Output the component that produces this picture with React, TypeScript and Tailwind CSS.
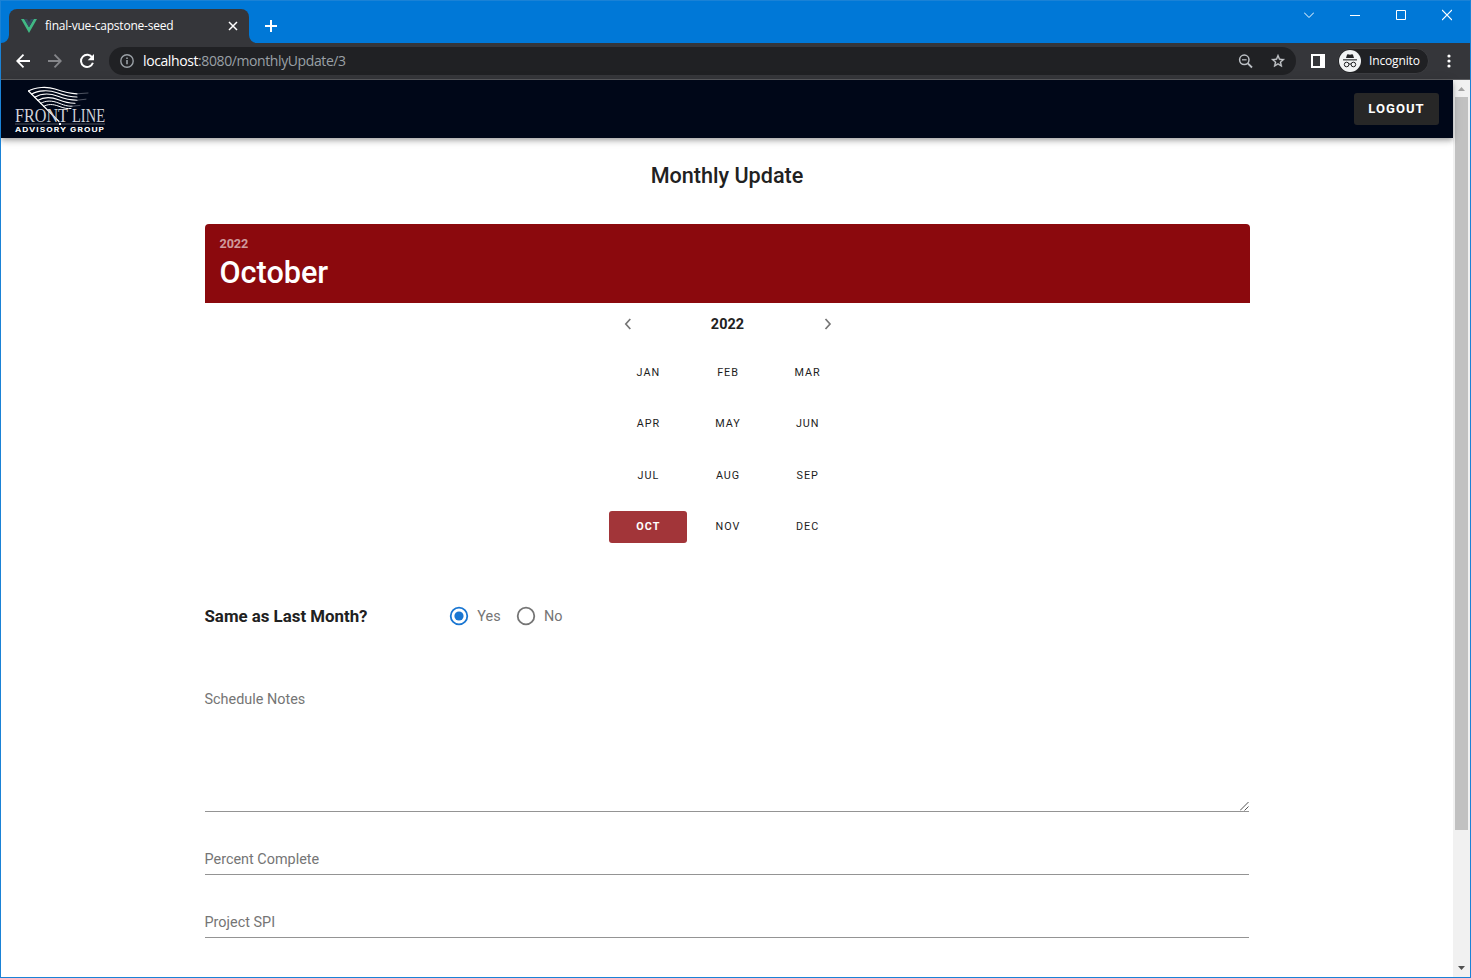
import React from "react";

const months = ["JAN", "FEB", "MAR", "APR", "MAY", "JUN", "JUL", "AUG", "SEP", "OCT", "NOV", "DEC"];

function VueLogo() {
  return (
    <svg width="16" height="14" viewBox="0 0 16 14" className="shrink-0">
      <path d="M0 0h3.2L8 8.3 12.8 0H16L8 13.9z" fill="#41b883" />
      <path d="M3.2 0H6.1L8 3.3 9.9 0h2.9L8 8.3z" fill="#35495e" />
    </svg>
  );
}

function TitleBar() {
  return (
    <div className="flex h-[42px] w-full bg-[#0078d7] pl-[8px] pt-[8px]">
      <div className="relative flex h-[34px] w-[240px] shrink-0 items-center rounded-t-[8px] bg-[#35363a] pl-[12px]">
        <svg className="absolute -left-[8px] bottom-0" width="8" height="8" viewBox="0 0 8 8">
          <path d="M8 0v8H0a8 8 0 0 0 8-8z" fill="#35363a" />
        </svg>
        <svg className="absolute -right-[8px] bottom-0" width="8" height="8" viewBox="0 0 8 8">
          <path d="M0 0v8h8a8 8 0 0 1-8-8z" fill="#35363a" />
        </svg>
        <VueLogo />
        <span className="ml-[8px] w-[183px] whitespace-nowrap font-['Open_Sans',sans-serif] text-[12px] tracking-[-0.22px] text-white">
          final-vue-capstone-seed
        </span>
        <svg width="10" height="10" viewBox="0 0 10 10" className="shrink-0" stroke="#fff" strokeWidth="1.5">
          <path d="M1 1l8 8M9 1L1 9" />
        </svg>
      </div>
      <svg width="12" height="12" viewBox="0 0 12 12" className="ml-[16px] mt-[11px]" stroke="#fff" strokeWidth="2">
        <path d="M6 0v12M0 6h12" />
      </svg>
      <div className="ml-auto flex h-[12px] gap-[36px] pr-[18px]">
        <svg width="10" height="12" viewBox="0 0 10 12" fill="none" stroke="#fff" strokeWidth="1">
          <path d="M0 3.500l5 5 5-5" />
        </svg>
        <svg width="10" height="12" viewBox="0 0 10 12" stroke="#fff">
          <path d="M0 6.500h10" />
        </svg>
        <svg width="10" height="12" viewBox="0 0 10 12" fill="none" stroke="#fff">
          <path d="M.5 1.500h9v9h-9z" />
        </svg>
        <svg width="10" height="12" viewBox="0 0 10 12" fill="none" stroke="#fff" strokeWidth="1.2">
          <path d="M0 1l10 10M10 1L0 11" />
        </svg>
      </div>
    </div>
  );
}

function Toolbar() {
  return (
    <div className="flex h-[37px] w-full items-center border-b border-[#5c5d60] bg-[#35363a] pl-[15px] font-['Open_Sans',sans-serif]">
      <svg width="14" height="14" viewBox="0 0 14 14" fill="none" stroke="#fff" strokeWidth="1.8">
        <path d="M14 7H1.500M7.500.7L1.200 7l6.300 6.300" />
      </svg>
      <svg width="14" height="14" viewBox="0 0 14 14" fill="none" stroke="#85868a" strokeWidth="1.800" className="ml-[18px]">
        <path d="M0 7h12.500M6.500.7L12.800 7l-6.300 6.300" />
      </svg>
      <svg width="16" height="16" viewBox="0 0 16 16" fill="none" className="ml-[17px]">
        <path d="M13.300 4.700A6.100 6.100 0 1 0 13.900 9.800" stroke="#fff" strokeWidth="2" />
        <path d="M15 1v6.300H8.700z" fill="#fff" />
      </svg>
      <div className="ml-[14px] flex h-[28px] w-[1187px] shrink-0 items-center rounded-full bg-[#202124] pl-[11px] pr-[10px]">
        <svg width="14" height="14" viewBox="0 0 14 14" fill="none" stroke="#9aa0a6" strokeWidth="1.400">
          <circle cx="7" cy="7" r="6.200" />
          <path d="M7 6v4.300M7 3.500v1.500" strokeWidth="1.600" />
        </svg>
        <div className="ml-[9px] whitespace-nowrap pb-[1px] text-[14px] tracking-[-0.4px] text-[#9aa0a6]">
          <span className="text-white">localhost</span>:8080/monthlyUpdate/3
        </div>
        <svg width="15" height="15" viewBox="0 0 15 15" fill="none" stroke="#bdc1c6" strokeWidth="1.500" className="ml-auto">
          <circle cx="6.300" cy="5.800" r="4.700" />
          <path d="M9.800 9.300l4.200 4.200" strokeWidth="1.800" />
          <path d="M4 5.800h4.600" strokeWidth="1.200" />
        </svg>
        <svg width="16" height="16" viewBox="0 0 24 24" className="ml-[17px]" fill="#c8cbcf" stroke="#c8cbcf" strokeWidth=".5">
          <path d="M22 9.240l-7.190-.62L12 2 9.190 8.630 2 9.240l5.460 4.730L5.820 21 12 17.270 18.180 21l-1.630-7.030L22 9.240zM12 15.400l-3.760 2.270 1-4.280-3.320-2.880 4.380-.38L12 6.100l1.710 4.040 4.380.38-3.320 2.880 1 4.280L12 15.400z" />
        </svg>
      </div>
      <svg width="14" height="14" viewBox="0 0 14 14" className="ml-[15px] shrink-0">
        <path d="M0 0h14v14H0zM2 2v10h7V2z" fill="#fff" fillRule="evenodd" />
      </svg>
      <div className="ml-[12px] flex h-[26px] w-[92px] shrink-0 items-center rounded-full border border-[#3c3d41] bg-[#202124] pl-[1px]">
        <svg width="22" height="22" viewBox="0 0 22 22" className="shrink-0">
          <circle cx="11" cy="11" r="11" fill="#f1f3f4" />
          <path d="M7 8l1-3.200q.3-.7 1-.5l2 .4 2-.4q.7-.2 1 .5l1 3.200z" fill="#202124" />
          <path d="M4 9.300h14v1.100H4z" fill="#202124" />
          <g fill="none" stroke="#202124" strokeWidth="1">
            <circle cx="7.600" cy="14.500" r="2.300" />
            <circle cx="14.400" cy="14.500" r="2.300" />
            <path d="M9.900 14.200q1.100-.7 2.200 0" />
          </g>
        </svg>
        <span className="ml-[8px] text-[12px] tracking-[-0.15px] text-white">Incognito</span>
      </div>
      <svg width="4" height="14" viewBox="0 0 4 14" fill="#fff" className="ml-[17.500px] shrink-0">
        <circle cx="2" cy="2" r="1.600" />
        <circle cx="2" cy="7" r="1.600" />
        <circle cx="2" cy="12" r="1.600" />
      </svg>
    </div>
  );
}

function CompanyLogo() {
  return (
    <svg width="96" height="52" viewBox="0 0 96 52" className="shrink-0 overflow-visible">
      <g fill="none" stroke="#fff" strokeLinecap="round">
        <path d="M13.500 8L36 30.500 44 38.500" strokeWidth="1.200" />
        <path d="M13.500 8C20 4 32 3.300 40 6S54 10.500 62 10.800" strokeWidth="1.200" />
        <path d="M62 10.800L73 10" strokeWidth=".5" stroke="#9ca0aa" />
        <path d="M16.500 11.200C23 7.200 34 6.800 42 9.700S55 14 62 14" strokeWidth="1.100" />
        <path d="M19.500 14.300C26 10.500 35 10.200 43 13.300S56 17.200 62 17.200" strokeWidth="1.100" />
        <path d="M62 17.200L71 16.200" strokeWidth=".5" stroke="#9ca0aa" />
        <path d="M22.500 17.400C29 13.800 36 13.800 43.500 16.800S55 20.400 60 20.300" strokeWidth="1.100" />
        <path d="M25.500 20.500C31 17.200 37 17.400 44 20.200S54 23.300 57 23.200" strokeWidth="1" />
        <path d="M57 23.200L65 22.400" strokeWidth=".5" stroke="#9ca0aa" />
        <path d="M28.500 23.500C33 20.800 38 21 44 23.300S52 25.800 56 25.500" strokeWidth="1" />
      </g>
      <g fontFamily="Liberation Serif, serif" fontSize="18" fill="#d0d2d8">
        <text x="0" y="38.500" textLength="53" lengthAdjust="spacingAndGlyphs">
          FRONT
        </text>
        <text x="57" y="38.500" textLength="33" lengthAdjust="spacingAndGlyphs">
          LINE
        </text>
      </g>
      <path d="M0 41h90" stroke="#62656f" strokeWidth=".8" />
      <path d="M44 40h2v2h-2z" fill="#fff" />
      <text x="0" y="49" textLength="90" lengthAdjust="spacingAndGlyphs" letterSpacing=".8" fontFamily="Inter, sans-serif" fontWeight="700" fontSize="6.600" fill="#fff">
        ADVISORY GROUP
      </text>
    </svg>
  );
}

function AppHeader() {
  return (
    <header className="relative flex h-[58px] shrink-0 items-center justify-between bg-[#000718] pl-[14px] pr-[14px] shadow-[0_2px_4px_-1px_rgba(0,0,0,0.2),0_4px_5px_rgba(0,0,0,0.14),0_1px_10px_rgba(0,0,0,0.12)]">
      <CompanyLogo />
      <button className="h-[32px] w-[85px] rounded-[3px] bg-[#272727] text-[13px] font-bold tracking-[1.050px] text-white">
        LOGOUT
      </button>
    </header>
  );
}

function MonthPicker() {
  return (
    <section className="w-full">
      <div className="flex h-[79px] flex-col rounded-t-[4px] bg-[#8b090d] pl-[15px] pt-[12px] text-white">
        <div className="text-[12.600px] font-bold leading-[16px] tracking-[-0.100px] text-white/60">2022</div>
        <div className="mt-[3px] text-[30.600px] font-medium leading-[36px]">October</div>
      </div>
      <div className="ml-[404px] flex h-[42px] w-[239px] items-center justify-between pl-[11px] pr-[12px] text-[#757575]">
        <svg width="16" height="16" viewBox="0 0 16 16" fill="none" stroke="currentColor" strokeWidth="1.700">
          <path d="M10.300 3L5.800 8l4.500 5" />
        </svg>
        <span className="pt-[2px] text-[14.400px] font-bold tracking-[0.100px] text-[#212121]">2022</span>
        <svg width="16" height="16" viewBox="0 0 16 16" fill="none" stroke="currentColor" strokeWidth="1.700">
          <path d="M5.500 3l4.500 5-4.500 5" />
        </svg>
      </div>
      <div className="ml-[404px] grid w-[239px] grid-cols-3 pt-[2px]">
        {months.map((m) => (
          <div key={m} className="flex h-[51.500px] items-center justify-center">
            <button
              className={
                m === "OCT"
                  ? "h-[32px] w-[78px] rounded-[3px] bg-[#a23539] text-[10.800px] font-bold tracking-[0.960px] text-white"
                  : "h-[32px] w-[78px] text-[10.800px] tracking-[0.960px] text-[#1d1d1d]"
              }
            >
              {m}
            </button>
          </div>
        ))}
      </div>
    </section>
  );
}

function Radio({ label, checked }: { label: string; checked?: boolean }) {
  return (
    <label className="flex items-center">
      <svg width="20" height="20" viewBox="0 0 20 20" fill="none">
        <circle cx="10" cy="10" r="8.300" stroke={checked ? "#1976d2" : "#757575"} strokeWidth="1.800" />
        {checked && <circle cx="10" cy="10" r="4.600" fill="#1976d2" />}
      </svg>
      <span className="ml-[8px] pt-[2px] text-[14.400px] tracking-[0.150px] text-[#757575]">{label}</span>
    </label>
  );
}

function ScrollBar() {
  return (
    <div className="flex w-[17px] shrink-0 flex-col items-center bg-[#f1f1f1]">
      <svg width="17" height="17" viewBox="0 0 17 17">
        <path d="M5 11h7L8.500 7z" fill="#a3a3a3" />
      </svg>
      <div className="h-[733px] w-[13px] bg-[#c1c1c1]" />
      <svg width="17" height="17" viewBox="0 0 17 17" className="mt-auto">
        <path d="M5 6h7l-3.500 4z" fill="#505050" />
      </svg>
    </div>
  );
}

export default function App() {
  return (
    <div className="flex h-[978px] w-[1471px] flex-col overflow-hidden border border-[#1a82d6] bg-white">
      <TitleBar />
      <Toolbar />
      <div className="flex min-h-0 flex-1">
        <div className="flex w-[1452px] flex-col bg-white font-[Roboto,sans-serif]">
          <AppHeader />
          <main className="mx-auto w-[1045px]">
            <h1 className="flex h-[86px] items-center justify-center pb-[10px] text-[21.600px] font-medium text-[#212121]">
              Monthly Update
            </h1>
            <MonthPicker />
            <div className="mt-[42.600px] flex h-[40px] items-center">
              <span className="w-[244.700px] pt-[2px] text-[16.850px] font-bold text-[#212121]">Same as Last Month?</span>
              <Radio label="Yes" checked />
              <div className="w-[15px]" />
              <Radio label="No" />
            </div>
            <div className="mr-[1px] mt-[53px] flex h-[123px] items-end justify-between border-b border-[#949494]">
              <span className="self-start pt-[1px] text-[14.400px] leading-[20px] tracking-[0.010px] text-[#757575]">
                Schedule Notes
              </span>
              <svg width="9" height="9" viewBox="0 0 9 9" stroke="#555" strokeWidth="1">
                <path d="M0 8.500L8.500 0M4.500 8.500l4-4" />
              </svg>
            </div>
            <div className="mr-[1px] flex h-[63px] items-end border-b border-[#949494] pb-[4px] text-[14.400px] leading-[20px] tracking-[0.010px] text-[#757575]">
              Percent Complete
            </div>
            <div className="mr-[1px] flex h-[63px] items-end border-b border-[#949494] pb-[4px] text-[14.400px] leading-[20px] tracking-[0.010px] text-[#757575]">
              Project SPI
            </div>
          </main>
        </div>
        <ScrollBar />
      </div>
    </div>
  );
}
